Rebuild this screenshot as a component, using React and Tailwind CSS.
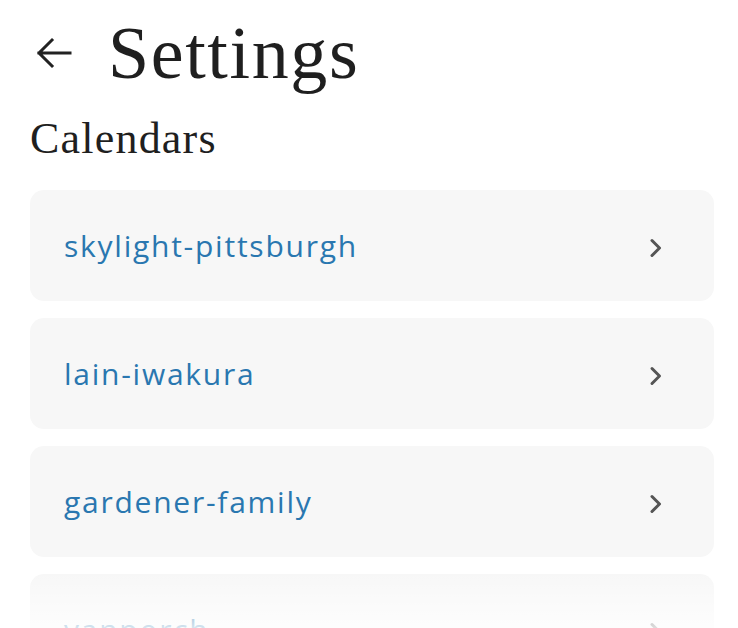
import React from "react";

const items = ["skylight-pittsburgh", "lain-iwakura", "gardener-family", "vanporch"];

function Chevron() {
  return (
    <svg width="14" height="22" viewBox="0 0 14 22" fill="none">
      <path d="M3 3.5 L10.5 11 L3 18.5" stroke="#555" strokeWidth="3" strokeLinecap="round" strokeLinejoin="round" />
    </svg>
  );
}

export default function App() {
  return (
    <div className="relative w-[738px] h-[628px] overflow-hidden bg-white">
      <div className="flex items-center gap-[36px] pl-[36px] pt-[14px] h-[92px]">
        <svg width="36" height="32" viewBox="0 0 36 32" fill="none">
          <path d="M34 16 H3 M16 3 L3 16 L16 29" stroke="#222" strokeWidth="3" strokeLinecap="square" strokeLinejoin="miter" />
        </svg>
        <h1 className="text-[74px] leading-none tracking-[1.6px] text-[#1f1f1f] font-['Liberation_Serif',serif]">Settings</h1>
      </div>
      <h2 className="pl-[30px] mt-[25px] text-[44px] leading-none tracking-[1.2px] text-[#1f1f1f] font-['Liberation_Serif',serif]">Calendars</h2>
      <div className="flex flex-col gap-[17px] pl-[30px] pr-[24px] mt-[29px]">
        {items.map((t) => (
          <div key={t} className="flex items-center justify-between h-[111px] rounded-[14px] bg-[#f7f7f7] pl-[34px] pr-[51px]">
            <span className="text-[30px] tracking-[1.75px] text-[#2a77b0] font-['Open_Sans',sans-serif]">{t}</span>
            <div className="pt-[4px]"><Chevron /></div>
          </div>
        ))}
      </div>
      <div className="absolute left-0 right-0 bottom-0 h-[56px] bg-gradient-to-b from-white/0 to-white/80" />
    </div>
  );
}
